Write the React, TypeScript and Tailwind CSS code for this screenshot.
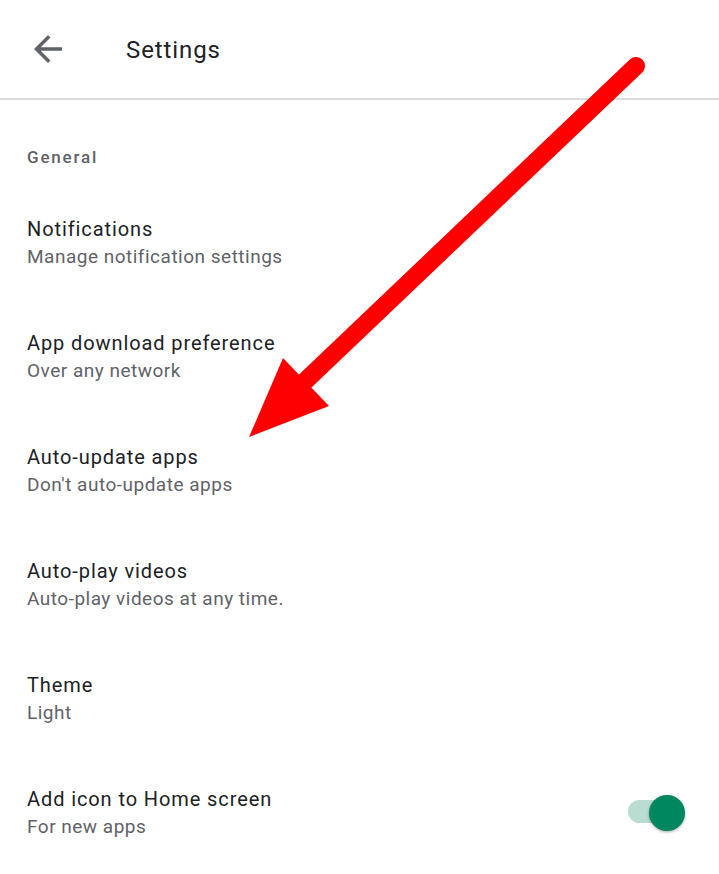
import React from "react";

const items = [
  { title: "Notifications", sub: "Manage notification settings" },
  { title: "App download preference", sub: "Over any network" },
  { title: "Auto-update apps", sub: "Don't auto-update apps" },
  { title: "Auto-play videos", sub: "Auto-play videos at any time." },
  { title: "Theme", sub: "Light" },
  { title: "Add icon to Home screen", sub: "For new apps", toggle: true },
];

const Toggle = () => (
  <div className="relative w-[57px] h-[36px]">
    <div className="absolute left-0 top-[5px] h-[23px] w-[52px] rounded-full bg-[#b9ddd2]" />
    <div className="absolute right-0 top-0 w-9 h-9 rounded-full bg-[#01875f] shadow-[0_1px_3px_rgba(0,0,0,0.35)]" />
  </div>
);

export default function App() {
  return (
    <div
      className="relative w-[719px] h-[874px] bg-white overflow-hidden"
      style={{ fontFamily: "Roboto, 'Liberation Sans', sans-serif" }}
    >
      {/* header */}
      <div className="h-[98px] flex items-center pl-[27px]">
        <svg width="42" height="42" viewBox="0 0 24 24" className="text-[#5f6368]">
          <path
            fill="currentColor"
            d="M20 11H7.83l5.59-5.59L12 4l-8 8 8 8 1.41-1.41L7.83 13H20v-2z"
          />
        </svg>
        <div className="ml-[57px] mt-[2px] text-[24px] tracking-[0.9px] text-[#202124] leading-none">
          Settings
        </div>
      </div>
      <div className="h-[2px] bg-[#dadce0]" />

      <div className="pt-[45px] pl-[27px] text-[17px] leading-6 font-medium tracking-[1.8px] text-[#5f6368]">
        General
      </div>

      <div className="mt-[17px]">
        {items.map((it) => (
          <div key={it.title} className="h-[114px] flex items-center pl-[27px] pr-[34px]">
            <div className="flex-1 flex flex-col">
              <div className="text-[20px] leading-[22px] tracking-[0.9px] text-[#202124]">{it.title}</div>
              <div className="mt-[6px] text-[19px] leading-[22px] tracking-[0.5px] text-[#5f6368]">{it.sub}</div>
            </div>
            {it.toggle && <Toggle />}
          </div>
        ))}
      </div>

      {/* red annotation arrow */}
      <svg className="absolute inset-0 pointer-events-none" width="719" height="874">
        <line x1="636" y1="66" x2="300" y2="386" stroke="#ff0000" strokeWidth="18" strokeLinecap="round" />
        <polygon points="249,437 283,358 329,406" fill="#ff0000" />
      </svg>
    </div>
  );
}
